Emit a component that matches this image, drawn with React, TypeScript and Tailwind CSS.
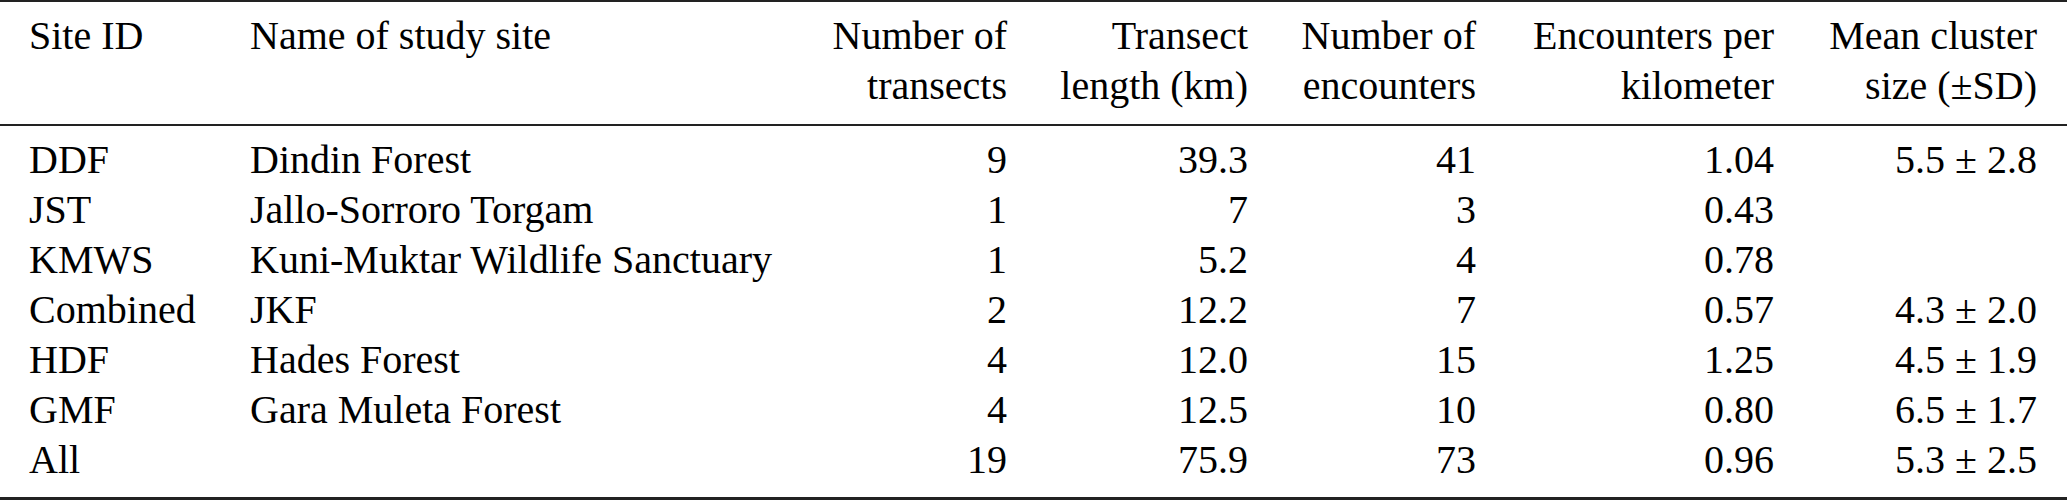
interface SiteRow {
  id: string;
  name: string;
  transects: string;
  length: string;
  encounters: string;
  perKm: string;
  cluster: string;
}

const rows: SiteRow[] = [
  { id: "DDF", name: "Dindin Forest", transects: "9", length: "39.3", encounters: "41", perKm: "1.04", cluster: "5.5 ± 2.8" },
  { id: "JST", name: "Jallo-Sorroro Torgam", transects: "1", length: "7", encounters: "3", perKm: "0.43", cluster: "" },
  { id: "KMWS", name: "Kuni-Muktar Wildlife Sanctuary", transects: "1", length: "5.2", encounters: "4", perKm: "0.78", cluster: "" },
  { id: "Combined", name: "JKF", transects: "2", length: "12.2", encounters: "7", perKm: "0.57", cluster: "4.3 ± 2.0" },
  { id: "HDF", name: "Hades Forest", transects: "4", length: "12.0", encounters: "15", perKm: "1.25", cluster: "4.5 ± 1.9" },
  { id: "GMF", name: "Gara Muleta Forest", transects: "4", length: "12.5", encounters: "10", perKm: "0.80", cluster: "6.5 ± 1.7" },
  { id: "All", name: "", transects: "19", length: "75.9", encounters: "73", perKm: "0.96", cluster: "5.3 ± 2.5" },
];

function App() {
  const head = "font-normal whitespace-nowrap leading-[49.5px] border-t-2 border-b-2 border-[#222] pt-[9px] pb-[14px] align-top";

  return (
    <div className="w-[2067px] bg-white text-black font-['Liberation_Serif','Times_New_Roman',serif] text-[40px] leading-[50px]">
      <table className="w-full table-fixed border-collapse">
        <colgroup>
          <col className="w-[223px]" />
          <col className="w-[581px]" />
          <col className="w-[230px]" />
          <col className="w-[241px]" />
          <col className="w-[228px]" />
          <col className="w-[298px]" />
          <col className="w-[266px]" />
        </colgroup>

        <thead>
          <tr>
            <th className={`${head} text-left pl-[29px]`}>Site ID</th>
            <th className={`${head} text-left pl-[27px]`}>Name of study site</th>
            <th className={`${head} text-right pr-[27px]`}>
              Number of
              <br />
              transects
            </th>
            <th className={`${head} text-right pr-[27px]`}>
              Transect
              <br />
              length (km)
            </th>
            <th className={`${head} text-right pr-[27px]`}>
              Number of
              <br />
              encounters
            </th>
            <th className={`${head} text-right pr-[27px]`}>
              Encounters per
              <br />
              kilometer
            </th>
            <th className={`${head} text-right pr-[30px]`}>
              Mean cluster
              <br />
              size (±SD)
            </th>
          </tr>
        </thead>

        <tbody>
          {rows.map((row, i) => {
            // first row sits below the mid rule, last row closes on the heavier bottom rule
            const pad =
              i === 0
                ? "pt-[9px]"
                : i === rows.length - 1
                ? "pb-[12px] border-b-[3px] border-[#222]"
                : "";

            return (
              <tr key={row.id}>
                <td className={`${pad} whitespace-nowrap text-left pl-[29px]`}>{row.id}</td>
                <td className={`${pad} whitespace-nowrap text-left pl-[27px]`}>{row.name}</td>
                <td className={`${pad} whitespace-nowrap text-right pr-[27px]`}>{row.transects}</td>
                <td className={`${pad} whitespace-nowrap text-right pr-[27px]`}>{row.length}</td>
                <td className={`${pad} whitespace-nowrap text-right pr-[27px]`}>{row.encounters}</td>
                <td className={`${pad} whitespace-nowrap text-right pr-[27px]`}>{row.perKm}</td>
                <td className={`${pad} whitespace-nowrap text-right pr-[30px]`}>{row.cluster}</td>
              </tr>
            );
          })}
        </tbody>
      </table>
    </div>
  );
}

export default App;
